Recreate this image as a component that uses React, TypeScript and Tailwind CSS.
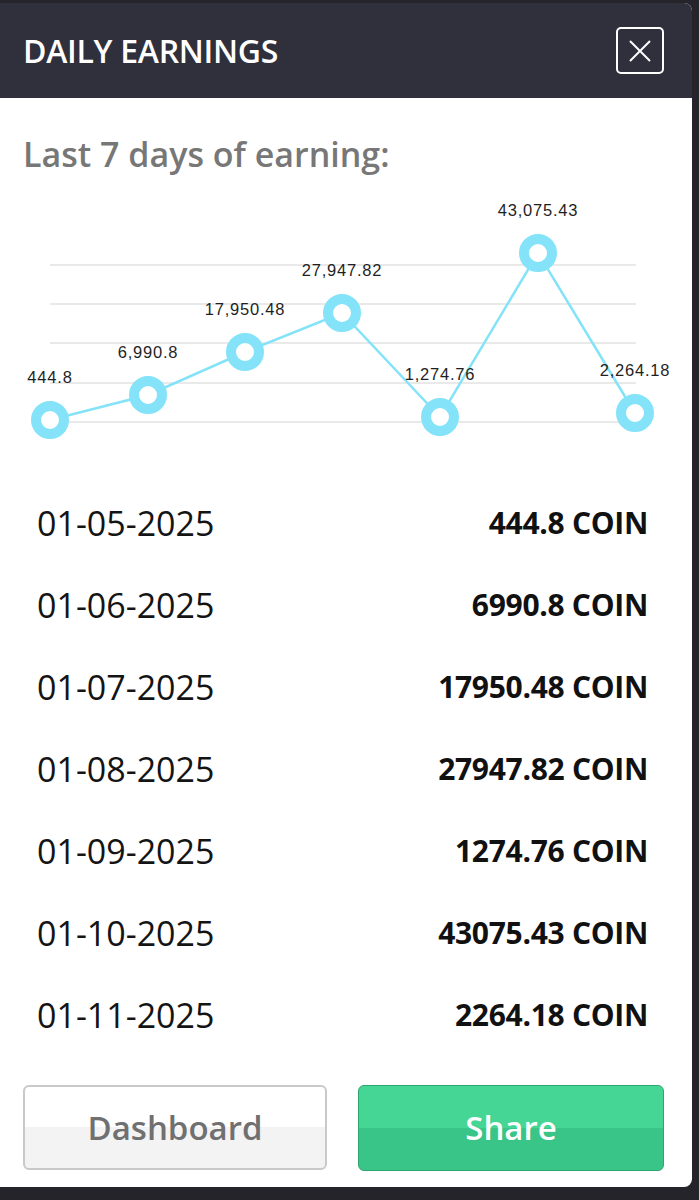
import { X } from "lucide-react";

const points = [
  { x: 50, y: 244, label: "444.8" },
  { x: 148, y: 219, label: "6,990.8" },
  { x: 245, y: 176, label: "17,950.48" },
  { x: 342, y: 137, label: "27,947.82" },
  { x: 440, y: 241, label: "1,274.76" },
  { x: 538, y: 77, label: "43,075.43" },
  { x: 635, y: 237, label: "2,264.18" },
];

const rows = [
  { date: "01-05-2025", value: "444.8 COIN" },
  { date: "01-06-2025", value: "6990.8 COIN" },
  { date: "01-07-2025", value: "17950.48 COIN" },
  { date: "01-08-2025", value: "27947.82 COIN" },
  { date: "01-09-2025", value: "1274.76 COIN" },
  { date: "01-10-2025", value: "43075.43 COIN" },
  { date: "01-11-2025", value: "2264.18 COIN" },
];

const gridLines = [89, 128, 167, 207, 246];

const EarningsChart = () => {
  const line = points.map((p) => `${p.x},${p.y}`).join(" ");
  return (
    <svg width="692" height="306" viewBox="0 0 692 306" className="block">
      {gridLines.map((y) => (
        <line key={y} x1="50" x2="636" y1={y} y2={y} stroke="#e2e2e2" strokeWidth="1.5" />
      ))}
      <polyline points={line} fill="none" stroke="#84e3f8" strokeWidth="2.5" />
      {points.map((p) => (
        <circle key={p.label} cx={p.x} cy={p.y} r="14" fill="#fff" stroke="#84e3f8" strokeWidth="10" />
      ))}
      {points.map((p) => (
        <text
          key={p.label + "t"}
          x={p.x}
          y={p.y - 37}
          textAnchor="middle"
          fontFamily="'Liberation Sans', Arial, sans-serif"
          fontSize="16.5"
          letterSpacing="0.8"
          fill="#1f1f1f"
        >
          {p.label}
        </text>
      ))}
    </svg>
  );
};

export default function App() {
  return (
    <div
      className="w-[699px] h-[1200px] overflow-hidden bg-[#24242a] pt-[3px]"
      style={{ fontFamily: "'Open Sans', sans-serif" }}
    >
      <div className="w-[692px] rounded-tr-[8px] rounded-br-[8px] overflow-hidden bg-white">
        <div className="h-[95px] bg-[#302f3c] flex items-center justify-between pl-[23px] pr-[28px]">
          <h1 className="text-[32px] font-semibold text-white leading-none tracking-[-0.3px]">
            DAILY EARNINGS
          </h1>
          <button className="w-[48px] h-[47px] border-2 border-white rounded-[5px] flex items-center justify-center text-white">
            <X size={38} strokeWidth={1.2} />
          </button>
        </div>

        <div className="pt-[34px]">
          <h2 className="px-[23px] text-[34px] leading-[44px] font-semibold text-[#777777]">
            Last 7 days of earning:
          </h2>
          <EarningsChart />
          <div className="flex flex-col">
            {rows.map((r) => (
              <div key={r.date} className="h-[82px] flex items-center justify-between pl-[37px] pr-[44px]">
                <span className="text-[34px] leading-none text-[#141414]">{r.date}</span>
                <span className="text-[30px] leading-none font-bold text-[#111111] tracking-[-0.3px]">
                  {r.value}
                </span>
              </div>
            ))}
          </div>
          <div className="flex gap-[31px] pl-[23px] pr-[28px] pt-[29px] pb-[16px]">
            <button className="w-[304px] h-[85px] rounded-[6px] border-2 border-[#c9c9c9] bg-[linear-gradient(to_bottom,#ffffff_50%,#f3f3f3_50%)] text-[33px] font-semibold text-[#707070]">
              Dashboard
            </button>
            <button className="w-[306px] h-[86px] rounded-[6px] border border-[#2fa46f] bg-[linear-gradient(to_bottom,#45d595_50%,#39c488_50%)] text-[33px] font-semibold text-white">
              Share
            </button>
          </div>
        </div>
      </div>
    </div>
  );
}
